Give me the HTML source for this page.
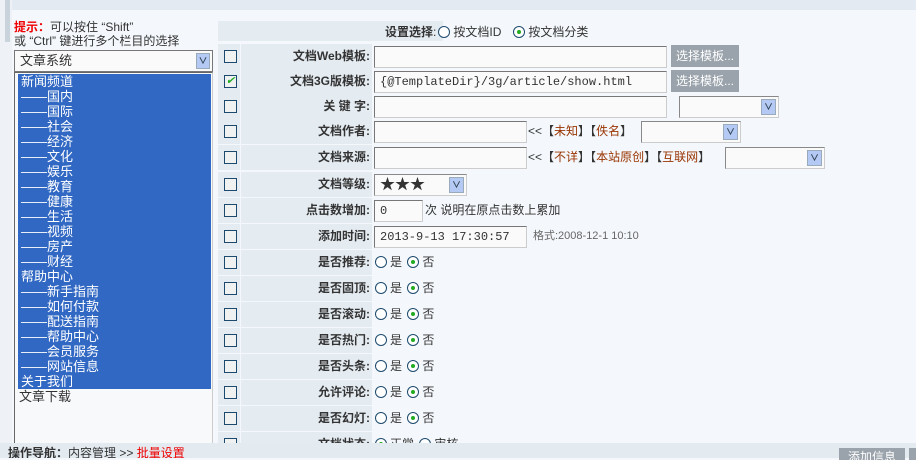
<!DOCTYPE html><html><head><meta charset="utf-8"><style>
*{margin:0;padding:0;box-sizing:border-box}
body{width:916px;height:458px;overflow:hidden;background:#f4f8fc;font:12px "Liberation Sans","Noto Sans CJK SC",sans-serif;color:#333;position:relative}
.abs{position:absolute}
.top{left:12px;top:0;width:904px;height:10px;background:#e3eaf2}
.lb{left:14px;top:72px;width:199px;height:372px;border:1px solid #666;border-right-color:#ccc;background:#f7f9fb;font-size:13px;line-height:15px}
.lb div{padding-left:3px}
.sel{background:#3168c3;color:#fff;margin:1px 1px 0 3px}
.sel div{padding-left:0}
.row{position:absolute;left:218px;width:698px;height:25px;}
.cb{position:absolute;left:0;width:22px;height:25px;background:#e4ebf1}
.cb i{position:absolute;left:6px;top:6px;width:13px;height:13px;border:1px solid #1c4a6e;background:#f0f2f2}
.lab{position:absolute;left:23px;width:131px;height:25px;background:#e4ebf1;text-align:right;font-weight:bold;line-height:25px;font-size:12px;padding-right:2px}
.val{position:absolute;left:155px;right:0;height:25px;line-height:25px}
.in{position:absolute;top:2px;height:22px;border:1px solid #777;border-right-color:#ccc;border-bottom-color:#ccc;background:#fafafa;font-size:12px;line-height:20px;padding-left:5px;font-family:"Liberation Mono","Noto Sans CJK SC",monospace}
.dd{position:absolute;top:2px;height:22px;border:1px solid #888;border-right-color:#ccc;border-bottom-color:#ccc;background:#fafafa}
.dd b{position:absolute;right:2px;top:2px;width:15px;height:16px;background:#b4caf4;border:1px solid #9ab;color:#345;font-size:9px;text-align:center;line-height:15px}
.btn{position:absolute;top:1px;height:22px;background:#9aa3ab;color:#fff;width:68px;text-align:center;line-height:22px}
.r{display:inline-block;width:12px;height:12px;border:1px solid #1c4a6e;border-radius:50%;background:#fff;vertical-align:-2px;margin:0 3px 0 2px;position:relative}
.r.on::after{content:"";position:absolute;left:3px;top:3px;width:4px;height:4px;border-radius:50%;background:#2a2}
.br{color:#993300}
</style></head><body>
<div class="abs" style="left:0;top:0;width:12px;height:458px;background:#eef2f6"></div>
<div class="abs" style="left:5px;top:0;width:5px;height:42px;background:#c9d3dc"></div>
<div class="abs top"></div>
<div class="abs" style="left:14px;top:20px;line-height:14px;font-size:12px"><span style="color:#e00;font-weight:bold">提示：</span>可以按住 “Shift”<br>或 “Ctrl” 键进行多个栏目的选择</div>
<div class="abs dd" style="left:14px;top:50px;width:199px;height:22px;font-size:13px;line-height:20px;padding-left:5px;border-color:#777">文章系统<b style="width:14px">&#8744;</b></div>
<div class="abs lb"><div class="sel">
<div>新闻频道</div><div>——国内</div><div>——国际</div><div>——社会</div><div>——经济</div><div>——文化</div><div>——娱乐</div><div>——教育</div><div>——健康</div><div>——生活</div><div>——视频</div><div>——房产</div><div>——财经</div><div>帮助中心</div><div>——新手指南</div><div>——如何付款</div><div>——配送指南</div><div>——帮助中心</div><div>——会员服务</div><div>——网站信息</div><div>关于我们</div></div><div style="padding-left:4px">文章下载</div></div>
<div class="row" style="top:21px;height:20px;background:#e4ebf1;width:225px"></div>
<div class="abs" style="left:385px;top:22px;line-height:20px"><b>设置选择</b>:<span class="r"></span>按文档ID &nbsp; <span class="r on"></span>按文档分类</div>

<div class="row" style="top:44px"><div class="cb"><i></i></div><div class="lab">文档Web模板:</div><div class="val"><div class="in" style="left:1px;width:293px"></div><div class="btn" style="left:298px">选择模板...</div></div></div>
<div class="row" style="top:69px"><div class="cb"><i style="color:#2a2;font-size:11px;line-height:11px;text-align:center">✔</i></div><div class="lab">文档3G版模板:</div><div class="val"><div class="in" style="left:1px;width:293px">{@TemplateDir}/3g/article/show.html</div><div class="btn" style="left:298px">选择模板...</div></div></div>
<div class="row" style="top:94px"><div class="cb"><i></i></div><div class="lab">关 键 字:</div><div class="val"><div class="in" style="left:1px;width:293px"></div><div class="dd" style="left:306px;width:100px"><b>&#8744;</b></div></div></div>
<div class="row" style="top:119px"><div class="cb"><i></i></div><div class="lab">文档作者:</div><div class="val"><div class="in" style="left:1px;width:153px"></div><span class="abs" style="left:155px">&lt;&lt;【<span class="br">未知</span>】【<span class="br">佚名</span>】</span><div class="dd" style="left:268px;width:100px"><b>&#8744;</b></div></div></div>
<div class="row" style="top:145px"><div class="cb"><i></i></div><div class="lab">文档来源:</div><div class="val"><div class="in" style="left:1px;width:153px"></div><span class="abs" style="left:155px">&lt;&lt;【<span class="br">不详</span>】【<span class="br">本站原创</span>】【<span class="br">互联网</span>】</span><div class="dd" style="left:352px;width:100px"><b>&#8744;</b></div></div></div>
<div class="row" style="top:172px"><div class="cb"><i></i></div><div class="lab">文档等级:</div><div class="val"><div class="dd" style="left:1px;width:93px;font-size:15px;line-height:19px;padding-left:5px">★★★<b>&#8744;</b></div></div></div>
<div class="row" style="top:198px"><div class="cb"><i></i></div><div class="lab">点击数增加:</div><div class="val"><div class="in" style="left:1px;width:49px">0</div><span class="abs" style="left:52px">次 说明在原点击数上累加</span></div></div>
<div class="row" style="top:224px"><div class="cb"><i></i></div><div class="lab">添加时间:</div><div class="val"><div class="in" style="left:1px;width:153px">2013-9-13 17:30:57</div><span class="abs" style="left:160px;color:#666;font-size:11px">格式:2008-12-1 10:10</span></div></div>
<div class="row" style="top:250px"><div class="cb"><i></i></div><div class="lab">是否推荐:</div><div class="val"><span class="r"></span>是 <span class="r on"></span>否</div></div>
<div class="row" style="top:276px"><div class="cb"><i></i></div><div class="lab">是否固顶:</div><div class="val"><span class="r"></span>是 <span class="r on"></span>否</div></div>
<div class="row" style="top:302px"><div class="cb"><i></i></div><div class="lab">是否滚动:</div><div class="val"><span class="r"></span>是 <span class="r on"></span>否</div></div>
<div class="row" style="top:328px"><div class="cb"><i></i></div><div class="lab">是否热门:</div><div class="val"><span class="r"></span>是 <span class="r on"></span>否</div></div>
<div class="row" style="top:354px"><div class="cb"><i></i></div><div class="lab">是否头条:</div><div class="val"><span class="r"></span>是 <span class="r on"></span>否</div></div>
<div class="row" style="top:380px"><div class="cb"><i></i></div><div class="lab">允许评论:</div><div class="val"><span class="r"></span>是 <span class="r on"></span>否</div></div>
<div class="row" style="top:406px"><div class="cb"><i></i></div><div class="lab">是否幻灯:</div><div class="val"><span class="r"></span>是 <span class="r on"></span>否</div></div>
<div class="row" style="top:432px"><div class="cb"><i></i></div><div class="lab">文档状态:</div><div class="val"><span class="r on"></span>正常 <span class="r"></span>审核</div></div>
<div class="abs" style="left:0;top:443px;width:916px;height:15px;background:#e3eaf0;line-height:20px;padding-left:8px;overflow:hidden"><b>操作导航：</b>内容管理 &gt;&gt; <span style="color:#e00">批量设置</span></div>
<div class="abs" style="left:839px;top:448px;width:66px;height:12px;background:#9aa3ab;color:#fff;text-align:center;line-height:18px;overflow:hidden">添加信息</div>
<div class="abs" style="left:909px;top:448px;width:7px;height:12px;background:#9aa3ab"></div>
</body></html>
